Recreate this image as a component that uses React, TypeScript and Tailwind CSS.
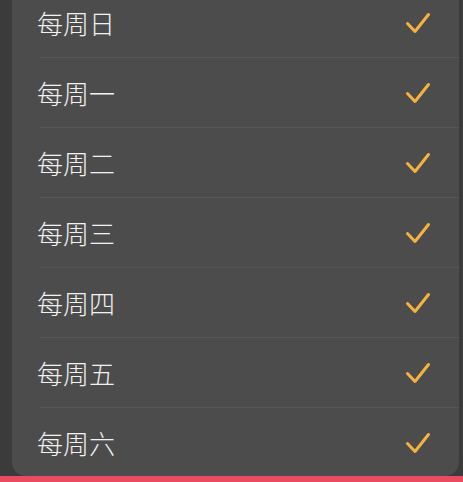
import React from "react";

const DAYS = ["每周日", "每周一", "每周二", "每周三", "每周四", "每周五", "每周六"];

function Check() {
  return (
    <svg width="26" height="22" viewBox="0 0 26 22" fill="none" className="shrink-0">
      <path
        d="M2.5 11.5 L10 19.5 L23.5 2.5"
        stroke="#f6b241"
        strokeWidth="3"
        strokeLinecap="round"
        strokeLinejoin="round"
      />
    </svg>
  );
}

export default function App() {
  return (
    <div
      className="flex h-[482px] w-[463px] flex-col overflow-hidden bg-[#3b3b3b]"
      style={{ fontFamily: '"Noto Sans CJK SC", "Noto Sans", sans-serif' }}
    >
      <div className="-mt-[12px] ml-[12px] mr-[4px] flex-1 overflow-hidden rounded-b-[14px] bg-[#4c4c4c]">
        {DAYS.map((d, i) => (
          <div
            key={d}
            className={
              "ml-[28px] flex h-[70px] shrink-0 items-center justify-between pr-[28px] " +
              (i < DAYS.length - 1 ? "border-b border-[#575757]" : "")
            }
          >
            <span className="-ml-[3px] text-[26px] font-light leading-none text-[#f2f2f2]">{d}</span>
            <Check />
          </div>
        ))}
      </div>
      <div className="h-[6px] shrink-0 bg-[#ea4b60]" />
    </div>
  );
}
